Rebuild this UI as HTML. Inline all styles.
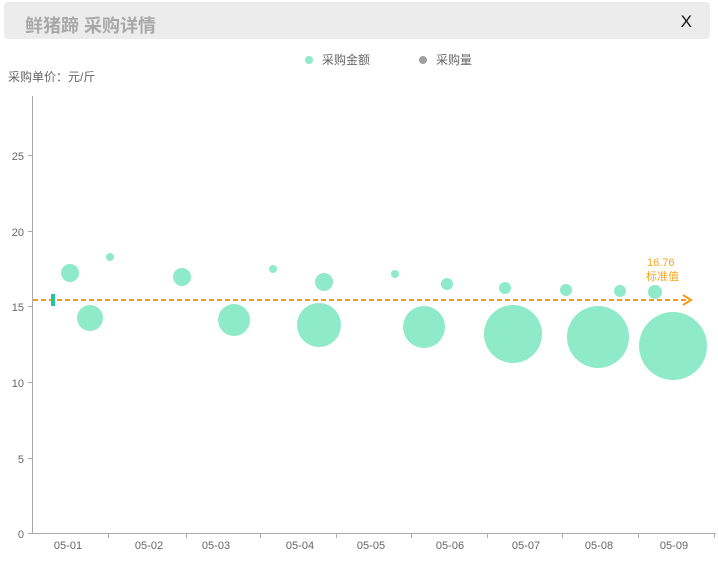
<!DOCTYPE html><html><head><meta charset="utf-8"><style>
body{margin:0;width:718px;height:566px;background:#fff;overflow:hidden;font-family:"Liberation Sans","Noto Sans CJK SC",sans-serif;}
.hdr{position:absolute;left:4px;top:2px;width:706px;height:37px;background:#ececec;border-radius:4px;}
.t{position:absolute;left:21px;top:10px;font-size:18px;font-weight:bold;color:#a8a8a8;}
.x{position:absolute;right:18px;top:10px;font-size:17px;color:#111;}
</style></head><body>
<div class="hdr"><div class="t">鲜猪蹄 采购详情</div><div class="x">X</div></div>
<svg width="718" height="566" style="position:absolute;left:0;top:0" font-family="Liberation Sans, Noto Sans CJK SC, sans-serif">
<circle cx="309" cy="60" r="4" fill="#8eeac8"/><text x="322" y="64" font-size="12" fill="#666">采购金额</text>
<circle cx="423" cy="60" r="4" fill="#a0a0a0"/><text x="436" y="64" font-size="12" fill="#666">采购量</text>
<text x="8" y="81" font-size="12" fill="#666">采购单价：元/斤</text>
<g stroke="#aaa" stroke-width="1"><line x1="32.5" y1="96" x2="32.5" y2="533"/><line x1="32" y1="533.5" x2="716" y2="533.5"/>
<line x1="28" y1="533.5" x2="32" y2="533.5"/><line x1="28" y1="458.5" x2="32" y2="458.5"/><line x1="28" y1="382.5" x2="32" y2="382.5"/><line x1="28" y1="306.5" x2="32" y2="306.5"/><line x1="28" y1="231.5" x2="32" y2="231.5"/><line x1="28" y1="155.5" x2="32" y2="155.5"/>
<line x1="108.5" y1="533" x2="108.5" y2="538"/><line x1="186.5" y1="533" x2="186.5" y2="538"/><line x1="260.5" y1="533" x2="260.5" y2="538"/><line x1="336.5" y1="533" x2="336.5" y2="538"/><line x1="411.5" y1="533" x2="411.5" y2="538"/><line x1="487.5" y1="533" x2="487.5" y2="538"/><line x1="562.5" y1="533" x2="562.5" y2="538"/><line x1="638.5" y1="533" x2="638.5" y2="538"/><line x1="714.5" y1="533" x2="714.5" y2="538"/></g>
<g font-size="11" fill="#666" text-anchor="end"><text x="24" y="538">0</text><text x="24" y="463">5</text><text x="24" y="387">10</text><text x="24" y="311">15</text><text x="24" y="236">20</text><text x="24" y="160">25</text></g>
<g font-size="11" fill="#666" text-anchor="middle"><text x="68" y="549">05-01</text><text x="149" y="549">05-02</text><text x="216" y="549">05-03</text><text x="300" y="549">05-04</text><text x="371" y="549">05-05</text><text x="450" y="549">05-06</text><text x="526" y="549">05-07</text><text x="599" y="549">05-08</text><text x="674" y="549">05-09</text></g>
<g fill="#8eeac8">
<circle cx="70" cy="273" r="9"/><circle cx="90" cy="318" r="13"/><circle cx="110" cy="257" r="4"/><circle cx="182" cy="277" r="9"/><circle cx="234" cy="320" r="16"/><circle cx="273" cy="269" r="4"/><circle cx="319" cy="325" r="22"/><circle cx="324" cy="282" r="9"/>
<circle cx="395" cy="274" r="4"/><circle cx="424" cy="327" r="21"/><circle cx="447" cy="284" r="6"/><circle cx="505" cy="288" r="6"/><circle cx="513" cy="334" r="29"/><circle cx="566" cy="290" r="6"/><circle cx="598" cy="337" r="31"/><circle cx="620" cy="291" r="6"/><circle cx="655" cy="292" r="7"/><circle cx="673" cy="346" r="34"/></g>
<line x1="33" y1="300" x2="690" y2="300" stroke="#f39c12" stroke-width="2" stroke-dasharray="5,3"/>
<path d="M683 295 L691 300 L683 305" fill="none" stroke="#f39c12" stroke-width="2"/>
<rect x="51" y="294" width="4" height="12" fill="#1fc7a5"/>
<text x="647" y="266" font-size="11" fill="#f5a623">16.76</text><text x="646" y="280" font-size="11" fill="#f5a623">标准值</text>
</svg>
</body></html>
